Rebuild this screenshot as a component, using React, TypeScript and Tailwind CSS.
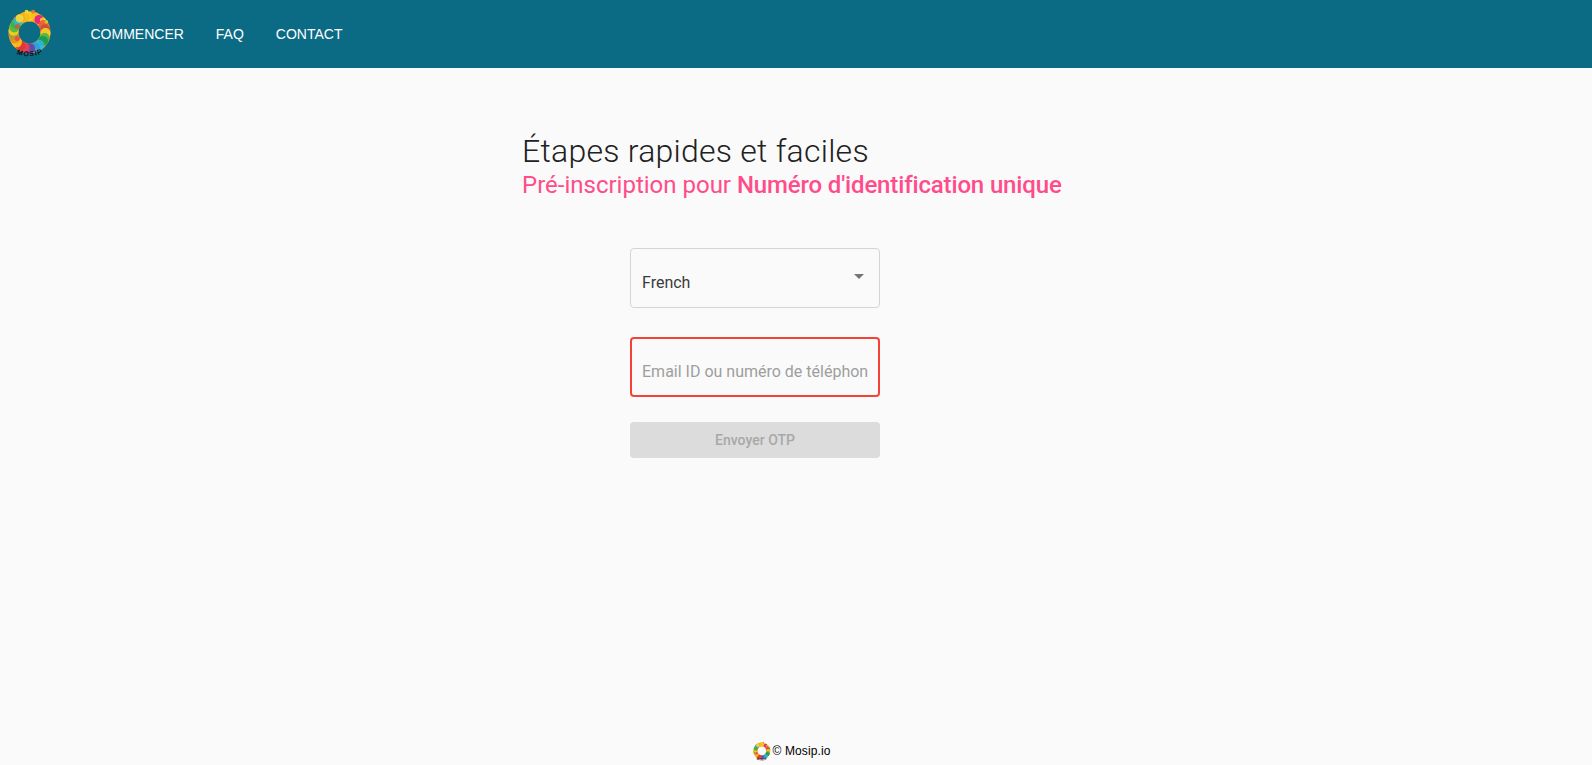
import React from 'react';

// ring blobs: [angle in degrees clockwise from top, distance from centre, radius, colour]
const blobs: [number, number, number, string][] = [
  [0, 16, 5, '#f7d21e'], [-18, 16, 5, '#f6b81f'], [-34, 17, 4.5, '#f39322'], [18, 17, 4, '#f5c21e'], [10, 21, 2, '#ef7b34'],
  [-8, 21, 2, '#f5dd2a'], [-45, 19, 2.5, '#e86a3c'], [36, 16, 4.5, '#e6178c'], [48, 18, 3, '#f3d025'], [62, 16, 5, '#ee5a3a'],
  [78, 16, 5, '#c7503a'], [58, 20, 1.8, '#c9d32a'], [92, 16, 5, '#f8d22a'], [110, 16, 5, '#43b649'], [122, 16, 5, '#159b4c'],
  [142, 16, 5, '#29b6e8'], [160, 16, 5, '#2d9fd8'], [180, 16, 5.5, '#6a3fa0'], [198, 16, 5, '#e8435a'], [214, 16, 5, '#e2342f'],
  [232, 16, 5, '#f7c71c'], [248, 16, 5, '#f08a24'], [262, 16, 5, '#a8a032'], [276, 16, 5, '#f7d21e'], [288, 16, 5, '#48b84a'],
  [302, 16, 5, '#35b34a'], [314, 16, 4.5, '#2fb7d6'], [325, 17, 4, '#f2dc38'], [244, 13.5, 2.5, '#e2503a'], [296, 13.5, 2.5, '#c85f35'],
];

const Logo: React.FC<{ id: string; className: string }> = ({ id, className }) => (
  <svg viewBox="0 0 44 52" className={className}>
    <circle cx={21.5} cy={24.5} r={16} fill="none" stroke="#f4a428" strokeWidth={10} />
    {blobs.map(([angle, dist, r, fill], i) => (
      <circle
        key={i}
        cx={21.5 + dist * Math.sin((angle * Math.PI) / 180)}
        cy={24.5 - dist * Math.cos((angle * Math.PI) / 180)}
        r={r}
        fill={fill}
        fillOpacity={0.9}
      />
    ))}
    <path id={id} d="M5 44 Q21 53 39 43" fill="none" />
    <text fontFamily="'Liberation Sans', sans-serif" fontSize="7" fontWeight="700" letterSpacing="1" fill="#0a0a0a">
      <textPath href={`#${id}`} startOffset="4">MOSIP</textPath>
    </text>
  </svg>
);

const App: React.FC = () => {
  return (
    <div className="h-[765px] flex flex-col overflow-hidden bg-[#fafafa] font-['Roboto',sans-serif]">
      <header className="h-[68px] shrink-0 flex items-center bg-[#0b6b85]">
        <Logo id="nav-logo-arc" className="w-[44px] h-[52px] ml-[8px] self-start mt-[8px] shrink-0" />
        <nav className="flex items-center ml-[38.5px] gap-[32px] font-['Liberation_Sans',sans-serif] text-[14px] text-white">
          <a>COMMENCER</a>
          <a>FAQ</a>
          <a>CONTACT</a>
        </nav>
      </header>

      <main className="flex-1 flex flex-col">
        <div className="ml-[522px] mt-[63px]">
          <h1 className="text-[32px] leading-[40px] tracking-[0.25px] font-light text-[#212121]">Étapes rapides et faciles</h1>
          <p className="text-[24px] leading-[28px] font-normal text-[#ff4c8a]">
            Pré-inscription pour <span className="font-medium tracking-[-0.15px]">Numéro d'identification unique</span>
          </p>
        </div>

        <div className="ml-[630px] mt-[49px] w-[250px] flex flex-col">
          <div className="relative h-[60px] rounded-[4px] border border-[#d4d4d4] flex items-center pl-[11px] pt-[10px] text-[16px] text-[#3a3a3a]">
            French
            <span className="absolute right-[15px] top-[25px] border-x-[5px] border-t-[5px] border-x-transparent border-t-[#757575]" />
          </div>
          <div className="mt-[29px] h-[60px] rounded-[4px] border-2 border-[#f44336] flex items-center pl-[10px] pt-[10px] text-[16px] text-[#9e9e9e] whitespace-nowrap overflow-hidden">
            Email ID ou numéro de téléphon
          </div>
          <button className="mt-[25px] h-[36px] rounded-[4px] bg-[#dcdcdc] text-[14px] font-medium text-[#a8a8a8]">
            Envoyer OTP
          </button>
        </div>
      </main>

      <footer className="h-[28px] shrink-0 flex items-center justify-center gap-[2px] pr-[9px] pb-[1px]">
        <Logo id="foot-logo-arc" className="w-[18px] h-[21px] mt-[2px]" />
        <span className="font-['Liberation_Sans',sans-serif] text-[12px] tracking-[0.1px] text-black">© Mosip.io</span>
      </footer>
    </div>
  );
};

export default App;
